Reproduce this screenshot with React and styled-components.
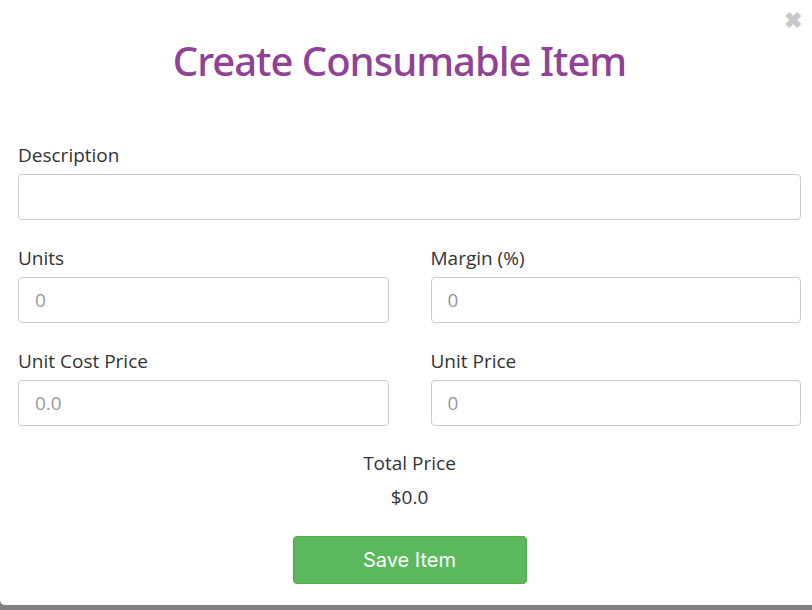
import React, { useState } from 'react';
import styled, { createGlobalStyle } from 'styled-components';

const GlobalStyle = createGlobalStyle`
  html, body {
    margin: 0;
    padding: 0;
    background: #808080;
    height: 610px;
    overflow: hidden;
  }
  * { box-sizing: border-box; }
`;

const Panel = styled.div`
  position: relative;
  width: 812px;
  height: 605px;
  background: #fff;
  border-radius: 0 0 0 5px;
  padding: 0 11px 0 18px;
  font-family: "Open Sans", "Liberation Sans", sans-serif;
  color: #333;
`;

const Close = styled.button`
  position: absolute;
  top: 10px;
  right: 10px;
  border: none;
  background: none;
  padding: 0;
  color: #c8c8c8;
  font-size: 22px;
  font-weight: bold;
  line-height: 1;
  cursor: pointer;
`;

const Title = styled.h1`
  margin: 0;
  padding: 33px 20px 0 0;
  text-align: center;
  font-family: "Noto Sans", "Open Sans", sans-serif;
  font-weight: 500;
  font-size: 40px;
  letter-spacing: -1px;
  line-height: 56px;
  color: #8f4397;
`;

const Form = styled.div`
  margin-top: 53px;
  display: flex;
  flex-direction: column;
  gap: 25px;
`;

const Row = styled.div`
  display: grid;
  grid-template-columns: ${(p) => (p.cols === 2 ? '1fr 1fr' : '1fr')};
  column-gap: 42px;
`;

const Field = styled.div`
  display: flex;
  flex-direction: column;
`;

const Label = styled.label`
  font-size: 19px;
  line-height: 26px;
  margin-bottom: 6px;
`;

const Input = styled.input`
  height: 46px;
  width: 100%;
  border: 1px solid #cccccc;
  border-radius: 4px;
  padding: 0 16px;
  font-family: "Open Sans", "Liberation Sans", sans-serif;
  font-size: 19px;
  color: #555;
  outline: none;
  &::placeholder {
    color: #999;
  }
`;

const Total = styled.div`
  margin-top: 24px;
  text-align: center;
  font-size: 19px;
  line-height: 26px;
`;

const Amount = styled.div`
  margin-top: 8px;
  text-align: center;
  font-size: 19px;
  line-height: 26px;
`;

const SaveButton = styled.button`
  display: block;
  margin: 26px auto 0;
  width: 234px;
  height: 48px;
  background: #5cb85c;
  border: 1px solid #4cae4c;
  border-radius: 4px;
  color: #fff;
  font-family: "Inter", "Open Sans", sans-serif;
  font-size: 20px;
  cursor: pointer;
`;

export default function App() {
  const [desc, setDesc] = useState('');
  return (
    <>
      <GlobalStyle />
      <Panel>
        <Close aria-label="close">✖</Close>
        <Title>Create Consumable Item</Title>
        <Form>
          <Row>
            <Field>
              <Label>Description</Label>
              <Input value={desc} onChange={(e) => setDesc(e.target.value)} />
            </Field>
          </Row>
          <Row cols={2}>
            <Field>
              <Label>Units</Label>
              <Input placeholder="0" />
            </Field>
            <Field>
              <Label>Margin (%)</Label>
              <Input placeholder="0" />
            </Field>
          </Row>
          <Row cols={2}>
            <Field>
              <Label>Unit Cost Price</Label>
              <Input placeholder="0.0" />
            </Field>
            <Field>
              <Label>Unit Price</Label>
              <Input placeholder="0" />
            </Field>
          </Row>
        </Form>
        <Total>Total Price</Total>
        <Amount>$0.0</Amount>
        <SaveButton>Save Item</SaveButton>
      </Panel>
    </>
  );
}
